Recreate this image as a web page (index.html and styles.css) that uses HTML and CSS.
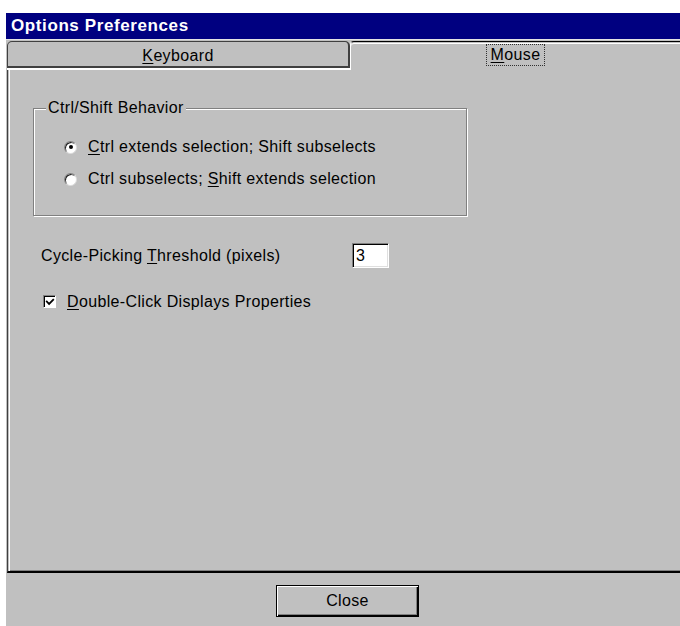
FILE: index.html
```html
<!DOCTYPE html>
<html lang="en">
<head>
<meta charset="utf-8">
<title>Options Preferences</title>
<link rel="stylesheet" href="styles.css">
</head>
<body>
<div class="window">
  <div class="titlebar">Options Preferences</div>

  <div class="tabstrip">
    <div class="tab tab-back"><u>K</u>eyboard</div>
    <div class="tab tab-front"><span class="focus"><u>M</u>ouse</span></div>
  </div>

  <div class="panel">
    <fieldset class="group">
      <legend class="group-label">Ctrl/Shift Behavior</legend>
      <div class="option">
        <span class="radio checked"></span>
        <span class="option-text"><u>C</u>trl extends selection; Shift subselects</span>
      </div>
      <div class="option">
        <span class="radio"></span>
        <span class="option-text">Ctrl subselects; <u>S</u>hift extends selection</span>
      </div>
    </fieldset>

    <div class="field-row">
      <span class="field-label">Cycle-Picking <u>T</u>hreshold (pixels)</span>
      <span class="textbox">3</span>
    </div>

    <div class="check-row">
      <span class="checkbox">
        <svg width="11" height="11" viewBox="0 0 11 11">
          <path d="M2 4.5 L4.5 7 L9 2.5" fill="none" stroke="#000" stroke-width="2" stroke-linecap="square"/>
        </svg>
      </span>
      <span class="check-text"><u>D</u>ouble-Click Displays Properties</span>
    </div>
  </div>

  <div class="footer">
    <div class="button">Close</div>
  </div>
</div>
</body>
</html>
```

FILE: styles.css
```css
* {
  box-sizing: border-box;
}

html, body {
  margin: 0;
  background: #ffffff;
  overflow: hidden;
}

body {
  padding: 13px 0 0 6px;
  font-family: "Liberation Sans", Arial, sans-serif;
  font-size: 16px;
  letter-spacing: 0.35px;
  color: #000000;
}

u {
  text-decoration: underline;
  text-underline-offset: 2px;
}

.window {
  width: 674px;
  height: 613px;
  background: #c0c0c0;
  display: flex;
  flex-direction: column;
}

/* caption */
.titlebar {
  height: 26px;
  line-height: 26px;
  padding-left: 5px;
  background: #000080;
  color: #ffffff;
  font-weight: bold;
  font-size: 17px;
  letter-spacing: 0.6px;
}

/* tabs */
.tabstrip {
  display: flex;
  height: 31px;
  padding: 2px 0 0 1px;
  box-shadow: inset 0 1px 0 #e4e4e4;
}

.tab {
  text-align: center;
  line-height: 20px;
}

.tab-back {
  width: 343px;
  height: 27px;
  padding-top: 4px;
  border-top: 1px solid #404040;
  border-left: 1px solid #404040;
  border-right: 2px solid #404040;
  border-bottom: 2px solid #404040;
  border-radius: 5px 5px 0 0;
  box-shadow: 0 2px 0 #ffffff;
}

.tab-front {
  flex: 1;
  height: 29px;
  padding-top: 2px;
  border-top: 1px solid #000000;
  border-left: 1px solid #ffffff;
  border-top-left-radius: 4px;
  box-shadow: inset 0 1px 0 #c0c0c0, inset 0 2px 0 #ffffff;
}

.focus {
  display: inline-block;
  height: 22px;
  padding: 0 4px;
  border: 1px dotted #303030;
}

/* page body */
.panel {
  height: 503px;
  margin-left: 1px;
  padding-top: 29px;
  border-left: 1px solid #404040;
  border-bottom: 2px solid #000000;
  box-shadow: inset 1px 0 0 #c0c0c0, inset 2px 0 0 #ffffff, inset 0 -1px 0 #808080;
}

.group {
  width: 434px;
  margin: 0 0 0 25px;
  padding: 20px 0 26px 0;
  min-width: 0;
  border: 1px solid #808080;
  box-shadow: 1px 1px 0 #ffffff, inset 1px 1px 0 #ffffff;
  display: flex;
  flex-direction: column;
  gap: 12px;
}

.group-label {
  margin-left: 12px;
  padding: 0 2px;
  line-height: 18px;
  background: #c0c0c0;
}

.option {
  display: flex;
  align-items: center;
  height: 20px;
  padding-left: 30px;
  gap: 11px;
}

.radio {
  position: relative;
  width: 13px;
  height: 13px;
  flex: none;
  border-radius: 50%;
  background: #ffffff;
  border: 1px solid;
  border-color: #808080 #dcdcdc #dcdcdc #808080;
  box-shadow: inset 1px 1px 0 #202020;
}

.radio.checked::after {
  content: "";
  position: absolute;
  left: 3.5px;
  top: 3.5px;
  width: 4px;
  height: 4px;
  border-radius: 50%;
  background: #000000;
}

.field-row {
  display: flex;
  align-items: center;
  height: 25px;
  margin-top: 27px;
  padding-left: 33px;
}

.field-label {
  width: 311px;
}

.textbox {
  width: 37px;
  height: 25px;
  padding: 2px 0 0 3px;
  line-height: 19px;
  background: #ffffff;
  border: 1px solid;
  border-color: #808080 #ffffff #ffffff #808080;
  box-shadow: inset 1px 1px 0 #000000, inset -1px -1px 0 #dfdfdf;
}

.check-row {
  display: flex;
  align-items: center;
  height: 17px;
  margin-top: 25px;
  padding-left: 35px;
  gap: 11px;
}

.checkbox {
  width: 13px;
  height: 13px;
  flex: none;
  display: flex;
  align-items: center;
  justify-content: center;
  background: #ffffff;
  border: 1px solid;
  border-color: #808080 #ffffff #ffffff #808080;
  box-shadow: inset 1px 1px 0 #000000;
}

.checkbox svg {
  display: block;
  margin: 1px 0 0 1px;
}

/* dialog buttons */
.footer {
  height: 53px;
  padding: 12px 0 0 9px;
  display: flex;
  justify-content: center;
}

.button {
  width: 143px;
  height: 32px;
  line-height: 29px;
  text-align: center;
  border: 1px solid #000000;
  box-shadow: inset 1px 1px 0 #ffffff, inset -1px -1px 0 #000000, inset -2px -2px 0 #808080;
}
```
